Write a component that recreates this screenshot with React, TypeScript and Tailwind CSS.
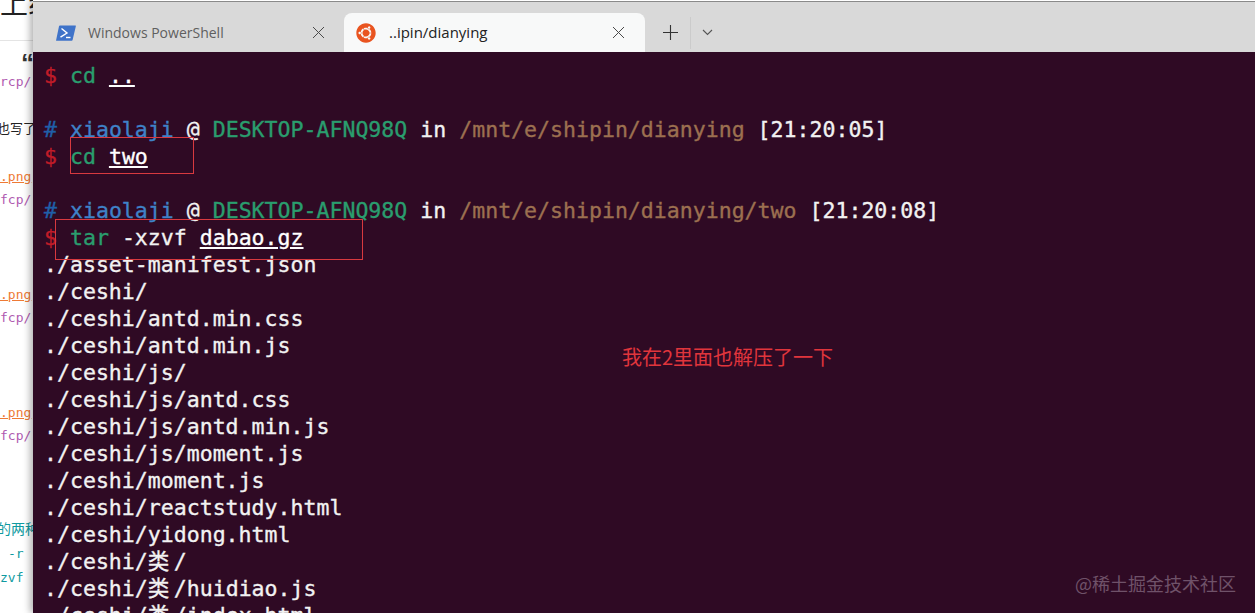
import React from "react";
import { FaUbuntu } from "react-icons/fa";

const mono = "font-['DejaVu_Sans_Mono','Noto_Sans_CJK_SC',monospace]";

const files = [
  "./asset-manifest.json",
  "./ceshi/",
  "./ceshi/antd.min.css",
  "./ceshi/antd.min.js",
  "./ceshi/js/",
  "./ceshi/js/antd.css",
  "./ceshi/js/antd.min.js",
  "./ceshi/js/moment.js",
  "./ceshi/moment.js",
  "./ceshi/reactstudy.html",
  "./ceshi/yidong.html",
  "./ceshi/类/",
  "./ceshi/类/huidiao.js",
  "./ceshi/类/index.html",
];

const Close = () => (
  <svg width="13" height="13" viewBox="0 0 13 13" className="stroke-[#4a4a4a]" fill="none" strokeWidth="1">
    <path d="M1 1l11 11M12 1L1 12" />
  </svg>
);

const PowerShell = () => (
  <svg width="20" height="16" viewBox="0 0 20 16">
    <path d="M4 0.5h15.5a.5.5 0 0 1 .4.6L16.6 15a1 1 0 0 1-1 .8H.6a.5.5 0 0 1-.5-.6L3 1.2A1 1 0 0 1 4 .5z" fill="#3f73c9" />
    <path d="M5.5 3.5L11 8l-6.5 4.2" stroke="#fff" strokeWidth="1.4" fill="none" />
    <path d="M10 12.5h4.5" stroke="#fff" strokeWidth="1.4" />
  </svg>
);

const Prompt = ({ path, time }: { path: string; time: string }) => (
  <div className="h-[27px]">
    <span className="text-[#1f5fa8]">#</span> <span className="text-[#3f82c8]">xiaolaji</span>{" "}
    <span className="text-[#f2f2f2]">@</span> <span className="text-[#2a9d6e]">DESKTOP-AFNQ98Q</span>{" "}
    <span className="text-[#f2f2f2]">in</span> <span className="text-[#9c7050]">{path}</span>{" "}
    <span className="text-[#f2f2f2]">[{time}]</span>
  </div>
);

const Cmd = ({ name, flags, arg }: { name: string; flags?: string; arg: string }) => (
  <div className="h-[27px]">
    <span className="text-[#c01c28]">$</span> <span className="text-[#2a9d6e]">{name}</span>
    {flags ? <span className="text-[#f2f2f2]"> {flags}</span> : null} <span className="text-white underline underline-offset-[2px]">{arg}</span>
  </div>
);

// left strip: bits of the article behind the terminal
const Article = () => (
  <div className="w-[33px] shrink-0 h-full overflow-hidden bg-white font-['Liberation_Sans','Noto_Sans_CJK_SC',sans-serif] relative">
    <div className="h-[41px] border-b border-[#e4e4e4] overflow-hidden">
      <div className="whitespace-nowrap text-[28px] leading-[28px] mt-[-9px] text-[#222]">上线</div>
    </div>
    <div className="h-[30px] pl-[21px] text-[26px] leading-[44px] font-bold text-[#333]">“</div>
    <div className="mt-[1px] h-[20px] text-[13px] leading-[20px] font-['DejaVu_Sans_Mono'] text-[#b05ab0]">rcp/</div>
    <div className="mt-[27px] h-[20px] text-[13px] leading-[20px] whitespace-nowrap text-[#222] ml-[-3px]">也写了</div>
    <Link mt="mt-[28px]" />
    <Link mt="mt-[75px]" />
    <Link mt="mt-[75px]" />
    <div className="mt-[73px] h-[20px] text-[14px] leading-[20px] whitespace-nowrap text-[#0f9aa0] ml-[-3px]">的两种</div>
    <div className="mt-[5px] h-[20px] pl-[8px] text-[13px] leading-[20px] font-['DejaVu_Sans_Mono'] text-[#0f9aa0]">-r</div>
    <div className="mt-[4px] h-[20px] text-[13px] leading-[20px] font-['DejaVu_Sans_Mono'] text-[#0f9aa0]">zvf</div>
  </div>
);

const Link = ({ mt }: { mt: string }) => (
  <div className={`${mt} font-['DejaVu_Sans_Mono'] text-[13px] leading-[20px]`}>
    <div className="h-[20px] text-[#ee7a35] underline">.png</div>
    <div className="h-[20px] mt-[3px] text-[#b05ab0]">fcp/</div>
  </div>
);

export default function App() {
  return (
    <div className="relative w-[1255px] h-[613px] overflow-hidden bg-white flex">
      <Article />

      <div className="flex-1 flex flex-col h-full pt-[1px] bg-white shadow-[-3px_0_7px_rgba(0,0,0,0.3)] z-10">
        {/* tab bar */}
        <div className="h-[51px] shrink-0 bg-[#d9d9d9] border-t border-[#8a8a8a] flex items-end font-['Open_Sans','Noto_Sans',sans-serif] text-[14px]">
          <div className="w-[311px] h-[39px] flex items-center pl-[23px] pr-[19px] text-[#5f5f5f]">
            <PowerShell />
            <span className="ml-[12px] flex-1">Windows PowerShell</span>
            <Close />
          </div>
          <div className="w-[301px] h-[39px] flex items-center pl-[12px] pr-[20px] bg-[#f8f9f9] rounded-t-[8px] text-[#222]">
            <FaUbuntu className="text-[20px] text-[#e95420]" />
            <span className="ml-[13px] flex-1 text-[15px] font-medium">..ipin/dianying</span>
            <Close />
          </div>
          <div className="h-[39px] flex items-center">
            <div className="w-[45px] pl-[5px] flex justify-center">
              <svg width="15" height="15" viewBox="0 0 15 15" stroke="#333" strokeWidth="1.1">
                <path d="M7.5 0v15M0 7.5h15" />
              </svg>
            </div>
            <div className="w-px h-[32px] bg-[#cbcbcb]" />
            <div className="w-[33px] flex justify-center">
              <svg width="11" height="7" viewBox="0 0 11 7" stroke="#555" strokeWidth="1.1" fill="none">
                <path d="M1 1l4.5 4.5L10 1" />
              </svg>
            </div>
          </div>
        </div>

        {/* terminal */}
        <div className={`flex-1 overflow-hidden bg-[#2f0a24] pt-[10px] pl-[11px] text-[21.55px] leading-[27px] whitespace-pre text-[#f2f2f2] [-webkit-text-stroke:0.35px] ${mono}`}>
          <Cmd name="cd" arg=".." />
          <div className="h-[27px]" />
          <Prompt path="/mnt/e/shipin/dianying" time="21:20:05" />
          <Cmd name="cd" arg="two" />
          <div className="h-[27px]" />
          <Prompt path="/mnt/e/shipin/dianying/two" time="21:20:08" />
          <Cmd name="tar" flags="-xzvf" arg="dabao.gz" />
          {files.map((f) => {
            const [head, tail] = f.split("类");
            return (
              <div key={f} className="h-[27px]">
                {head}
                {tail !== undefined ? <span className="inline-block w-[26px]">类</span> : null}
                {tail}
              </div>
            );
          })}
        </div>
      </div>

      {/* annotations drawn on top of the screenshot */}
      <div className="absolute z-20 left-[70px] top-[137px] w-[124px] h-[37px] border border-[#d8393f]" />
      <div className="absolute z-20 left-[55px] top-[219px] w-[308px] h-[41px] border border-[#d8393f]" />
      <div className="absolute z-20 left-[622px] top-[345px] text-[20px] leading-[24px] text-[#e0353c] font-['Noto_Sans_CJK_SC',sans-serif]">
        我在2里面也解压了一下
      </div>
      <div className="absolute z-20 left-[1075px] top-[571px] text-[18px] leading-[24px] text-[#6f5269] font-['Noto_Sans_CJK_SC',sans-serif]">
        @稀土掘金技术社区
      </div>
    </div>
  );
}
